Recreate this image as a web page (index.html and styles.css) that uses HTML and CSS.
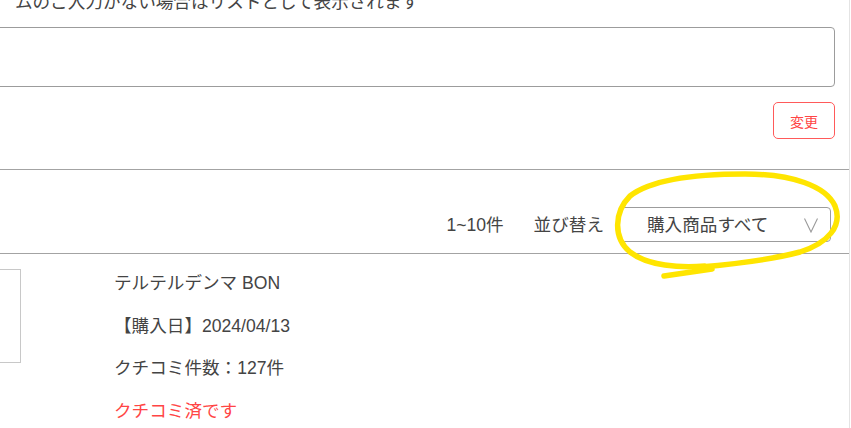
FILE: index.html
```html
<!DOCTYPE html>
<html lang="ja">
<head>
<meta charset="utf-8">
<title>購入商品</title>
<link rel="stylesheet" href="styles.css">
</head>
<body>
<div class="page">
  <section class="search">
    <p class="note">ムのご入力がない場合はリストとして表示されます</p>
    <input class="field" type="text" aria-label="キーワード">
    <div class="actions"><button class="btn-change" type="button">変更</button></div>
  </section>
  <div class="toolbar">
    <span class="count">1~10件</span>
    <span class="sort-label">並び替え</span>
    <div class="select">
      <span class="select-text">購入商品すべて</span>
      <svg class="chevron" width="14" height="15" viewBox="0 0 14 15"><polyline points="0.5,0.5 7,14 13.5,0.5" fill="none" stroke="#9a9a9a" stroke-width="1.1"/></svg>
    </div>
  </div>
  <div class="product">
    <div class="thumb"></div>
    <div class="info">
      <p>テルテルデンマ BON</p>
      <p>【購入日】2024/04/13</p>
      <p>クチコミ件数：127件</p>
      <p class="done">クチコミ済です</p>
    </div>
  </div>
</div>
<svg class="annotation" width="851" height="428" viewBox="0 0 851 428">
  <path d="M 705 266 C 680 268, 648 266, 630 252 C 613 238, 614 212, 630 196 C 652 179, 700 174, 745 174 C 792 174, 826 186, 835 206 C 843 226, 828 243, 800 252 C 770 260, 735 264, 700 267" fill="none" stroke="#ffe500" stroke-width="5.5" stroke-linecap="round"/>
  <path d="M 664 276 L 712 269" fill="none" stroke="#ffe500" stroke-width="5.5" stroke-linecap="round"/>
</svg>
</body>
</html>
```
FILE: styles.css
```css
html, body {
  margin: 0;
  padding: 0;
  background: #fff;
  overflow: hidden;
  height: 428px;
}

body {
  position: relative;
  font-family: "Liberation Sans", "Noto Sans CJK JP", sans-serif;
  font-size: 17.6px;
  color: #444;
}

.page {
  box-sizing: border-box;
  width: 1001px;
  height: 438px;
  margin: -10px 0 0 -151px;
  border-right: 1px solid #e4e4e4;
}

.search {
  padding: 0 14px 30px 0;
  border-bottom: 1px solid #a3a3a3;
}

.note {
  margin: 0 0 13px;
  padding-left: 166px;
  line-height: 24px;
  color: #444;
}

.field {
  display: block;
  box-sizing: border-box;
  width: 100%;
  height: 60px;
  margin: 0;
  border: 1px solid #9c9c9c;
  border-radius: 4px;
  background: #fff;
}

.actions {
  display: flex;
  justify-content: flex-end;
  margin-top: 15px;
}

.btn-change {
  box-sizing: border-box;
  width: 62px;
  height: 37px;
  padding: 0;
  border: 1px solid #ff5a5a;
  border-radius: 5px;
  background: #fff;
  color: #ff4545;
  font-family: "Liberation Sans", "Noto Sans CJK JP", sans-serif;
  font-size: 14px;
}

.toolbar {
  display: flex;
  justify-content: flex-end;
  align-items: center;
  padding: 37px 18px 11px 0;
  border-bottom: 1px solid #a3a3a3;
}

.count {
  margin-right: 30px;
  line-height: 24px;
}

.sort-label {
  margin-right: 15px;
  line-height: 24px;
}

.select {
  box-sizing: border-box;
  width: 212px;
  height: 35px;
  display: flex;
  align-items: center;
  justify-content: space-between;
  padding: 0 12px 0 27px;
  border: 1px solid #9c9c9c;
  border-radius: 4px;
}

.select-text {
  line-height: 24px;
}

.chevron {
  display: block;
  margin-top: 2px;
}

.product {
  display: flex;
  gap: 93px;
  padding-top: 15px;
}

.thumb {
  box-sizing: border-box;
  width: 102px;
  height: 94px;
  margin-left: 70px;
  border: 1px solid #c8c8c8;
}

.info {
  padding-top: 1px;
}

.info p {
  margin: 0 0 16.5px;
  line-height: 26px;
  color: #444;
}

.info .done {
  color: #ff4545;
}

.annotation {
  position: absolute;
  top: 0;
  left: 0;
  pointer-events: none;
}
```
